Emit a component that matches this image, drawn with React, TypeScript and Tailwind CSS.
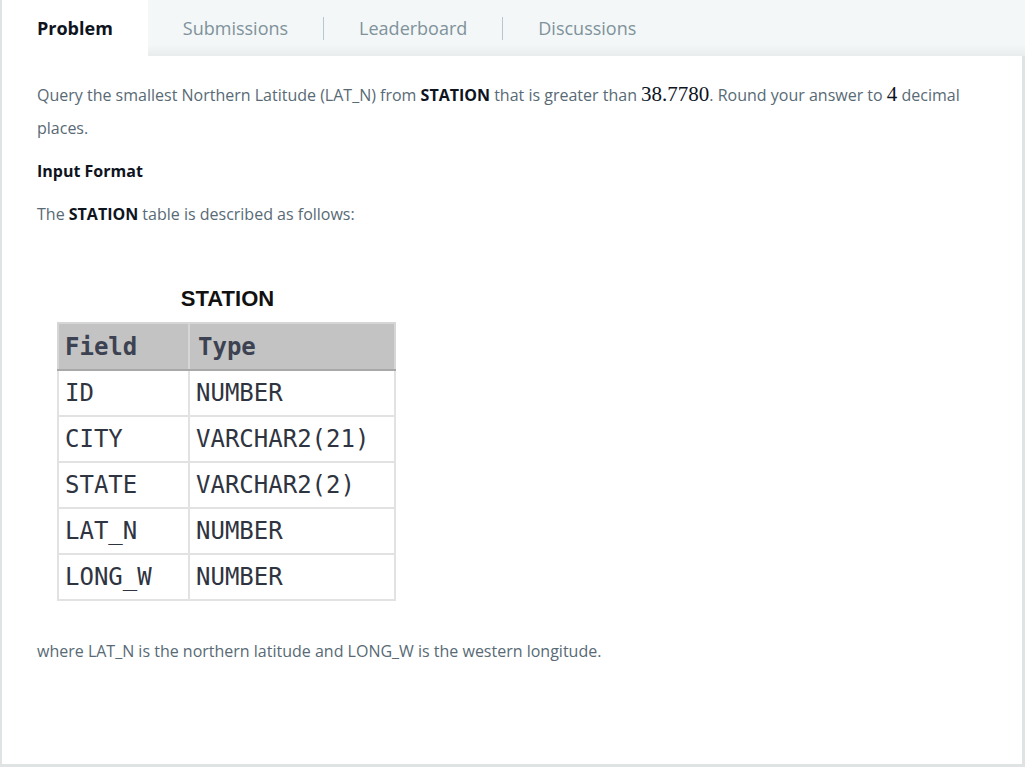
import React from 'react';

const rows: [string, string][] = [
  ['ID', 'NUMBER'],
  ['CITY', 'VARCHAR2(21)'],
  ['STATE', 'VARCHAR2(2)'],
  ['LAT_N', 'NUMBER'],
  ['LONG_W', 'NUMBER'],
];

const tabs = ['Submissions', 'Leaderboard', 'Discussions'];

export default function App() {
  return (
    <div className="w-[1025px] h-[767px] overflow-hidden bg-[#dfe3e3] pl-[2px] pr-[3px] pb-[3px] flex flex-col font-['Open_Sans',sans-serif]">
      {/* Tabs */}
      <div className="h-[56px] flex shrink-0 -mr-[3px] bg-gradient-to-b from-[#f3f7f7] from-80% to-[#e8ecec]">
        <div className="h-full bg-white px-[35px] flex items-center text-[18px] font-bold text-[#0e141e]">
          Problem
        </div>
        {tabs.map((t, i) => (
          <div key={t} className="h-full flex items-center">
            {i > 0 && <div className="w-px h-[23px] bg-[#b4c8cf]" />}
            <div className="px-[35px] text-[18px] text-[#7f929b]">{t}</div>
          </div>
        ))}
      </div>

      {/* Content */}
      <div className="flex-1 bg-white px-[35px] pt-[23px] text-[16px] text-[#586a75]">
        <p className="leading-[33px]">
          Query the smallest Northern Latitude (LAT_N) from{' '}
          <span className="font-bold text-[#0e141e]">STATION</span> that is greater than{' '}
          <span className="font-['Liberation_Serif',serif] text-[21px] leading-[20px] text-[#0e141e]">38.7780</span>. Round your answer to{' '}
          <span className="font-['Liberation_Serif',serif] text-[21px] leading-[20px] text-[#0e141e]">4</span> decimal places.
        </p>
        <p className="mt-[10px] leading-[33px] font-bold text-[#0e141e]">Input Format</p>
        <p className="mt-[10px] leading-[33px]">
          The <span className="font-bold text-[#0e141e]">STATION</span> table is described as follows:
        </p>

        {/* Table image */}
        <div className="mt-[55px] ml-[20px] w-[339px]">
          <div className="text-center text-[22px] font-bold text-[#111] font-['Liberation_Sans',sans-serif] leading-[26px] pl-[2px]">
            STATION
          </div>
          <table className="mt-[10px] w-[339px] border-collapse font-['DejaVu_Sans_Mono',monospace] text-[24px] text-[#2f3441]">
            <thead>
              <tr className="bg-[#c3c3c3] h-[47px]">
                <th className="w-[131px] text-left font-bold pl-[6px] border-2 border-[#d6d6d6] border-b-[#a8a8a8] text-[#3c4252]">Field</th>
                <th className="text-left font-bold pl-[8px] border-2 border-[#d6d6d6] border-b-[#a8a8a8] text-[#3c4252]">Type</th>
              </tr>
            </thead>
            <tbody>
              {rows.map(([f, t]) => (
                <tr key={f} className="h-[46px]">
                  <td className="pl-[6px] border-2 border-[#e2e2e2]">{f}</td>
                  <td className="pl-[6px] border-2 border-[#e2e2e2]">{t}</td>
                </tr>
              ))}
            </tbody>
          </table>
        </div>

        <p className="mt-[34px] leading-[33px]">
          where LAT_N is the northern latitude and LONG_W is the western longitude.
        </p>
      </div>
    </div>
  );
}
